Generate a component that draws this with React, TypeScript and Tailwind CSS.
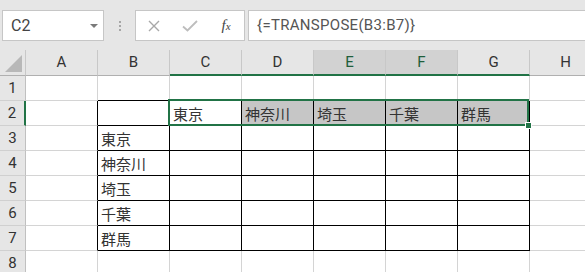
import React from 'react';

const columns = ['A', 'B', 'C', 'D', 'E', 'F', 'G', 'H'];
const rows = [1, 2, 3, 4, 5, 6, 7, 8];
const tableCols = ['B', 'C', 'D', 'E', 'F', 'G'];
const selectedCols = ['C', 'D', 'E', 'F', 'G'];
const highlightedCols = ['E', 'F'];

const prefectures = ['東京', '神奈川', '埼玉', '千葉', '群馬'];

const cellText = (row: number, col: string) => {
  if (col === 'B' && row >= 3 && row <= 7) return prefectures[row - 3];
  if (row === 2 && selectedCols.includes(col)) return prefectures[selectedCols.indexOf(col)];
  return '';
};

const NameBox = () => (
  <div className="w-[102px] h-[31px] border border-[#c6c6c6] bg-white flex items-center justify-between pl-[8px] pr-[5px]">
    <span className="font-['Roboto',sans-serif] text-[16px] text-[#444]">C2</span>
    <span className="w-0 h-0 border-l-[4px] border-r-[4px] border-t-[4px] border-l-transparent border-r-transparent border-t-[#7a7a7a]" />
  </div>
);

const FormulaButtons = () => (
  <div className="w-[110px] h-[31px] border border-[#c6c6c6] bg-white flex items-center">
    <div className="w-[36px] h-full flex items-center justify-center">
      <svg width="12" height="12" viewBox="0 0 12 12">
        <path d="M1 1 L11 11 M11 1 L1 11" stroke="#a8a8a8" strokeWidth="1.4" fill="none" />
      </svg>
    </div>
    <div className="w-[36px] h-full flex items-center justify-center">
      <svg width="16" height="12" viewBox="0 0 16 12">
        <path d="M1 6.5 L5.5 10.5 L15 1" stroke="#bdbdbd" strokeWidth="1.8" fill="none" />
      </svg>
    </div>
    <div className="w-[36px] h-full flex items-center justify-center">
      <span className="font-['Liberation_Serif',serif] italic text-[15px] text-[#444] leading-none">
        f<span className="text-[11px]">x</span>
      </span>
    </div>
  </div>
);

const Toolbar = () => (
  <div className="h-[50px] bg-[#e6e6e6] flex items-start pt-[10px] pl-[2px]">
    <NameBox />
    <div className="w-[31px] h-[31px] flex flex-col items-center justify-center gap-[2px] pl-[1px]">
      <span className="w-[2px] h-[2px] bg-[#a6a6a6]" />
      <span className="w-[2px] h-[2px] bg-[#a6a6a6]" />
      <span className="w-[2px] h-[2px] bg-[#a6a6a6]" />
    </div>
    <FormulaButtons />
    <div className="ml-[3px] flex-1 h-[31px] border-y border-l border-[#c6c6c6] bg-white flex items-center pl-[8px]">
      <span className="font-['Roboto',sans-serif] text-[15px] tracking-[0.3px] text-[#555]">{'{=TRANSPOSE(B3:B7)}'}</span>
    </div>
  </div>
);

const ColumnHeader = ({ col }: { col: string }) => {
  const selected = selectedCols.includes(col);
  const highlighted = highlightedCols.includes(col);
  return (
    <div
      className={`h-[26px] flex items-center justify-center border-r border-r-[#c8c8c8] font-['Roboto',sans-serif] text-[15px] ${
        selected ? 'border-b-2 border-b-[#217346]' : 'border-b border-b-[#b0b0b0]'
      } ${highlighted ? 'bg-[#d2d2d2] text-[#1f5e3b]' : 'bg-[#e6e6e6] text-[#333]'}`}
    >
      {col}
    </div>
  );
};

const Cell = ({ row, col }: { row: number; col: string }) => {
  const inTable = tableCols.includes(col) && row >= 2 && row <= 7;
  const rightBlack = inTable || (col === 'A' && row >= 2 && row <= 7);
  const bottomBlack = inTable || (col === 'B' && row === 1);
  const shaded = row === 2 && ['D', 'E', 'F', 'G'].includes(col);
  const active = row === 2 && col === 'C';
  const text = cellText(row, col);

  return (
    <div
      className={`h-[25px] border-r border-b flex items-center pl-[3px] ${rightBlack ? 'border-r-black' : 'border-r-[#d4d4d4]'} ${
        bottomBlack ? 'border-b-black' : 'border-b-[#d4d4d4]'
      } ${shaded ? 'bg-[#c6c6c6]' : 'bg-white'} ${active ? 'relative' : ''}`}
    >
      {text && (
        <span className="font-['Noto_Sans_CJK_JP',sans-serif] text-[15px] leading-none text-[#333] whitespace-nowrap">{text}</span>
      )}
      {active && (
        <div className="absolute -left-[2px] -top-[2px] w-[361px] h-[27px] border-2 border-[#217346] z-10 pointer-events-none">
          <span className="absolute -right-[5px] -bottom-[5px] w-[7px] h-[7px] bg-[#217346] border border-white" />
        </div>
      )}
    </div>
  );
};

export default function App() {
  return (
    <div className="w-[585px] h-[272px] overflow-hidden bg-white">
      <Toolbar />
      <div className="grid grid-cols-[26px_repeat(8,72px)] w-max">
        <div className="h-[26px] bg-[#e6e6e6] border-r border-r-[#c8c8c8] border-b border-b-[#b0b0b0] flex items-end justify-end pr-[3px] pb-[3px]">
          <svg width="17" height="17" viewBox="0 0 17 17">
            <path d="M17 0 L17 17 L0 17 Z" fill="#b8b8b8" />
          </svg>
        </div>
        {columns.map(col => (
          <ColumnHeader key={col} col={col} />
        ))}
        {rows.map(row => (
          <React.Fragment key={row}>
            <div
              className={`h-[25px] bg-[#e6e6e6] border-b border-b-[#d0d0d0] flex items-center justify-center font-['Roboto',sans-serif] text-[15px] text-[#333] ${
                row === 2 ? 'border-r-2 border-r-[#217346]' : 'border-r border-r-[#c0c0c0]'
              }`}
            >
              {row}
            </div>
            {columns.map(col => (
              <Cell key={col} row={row} col={col} />
            ))}
          </React.Fragment>
        ))}
      </div>
    </div>
  );
}
